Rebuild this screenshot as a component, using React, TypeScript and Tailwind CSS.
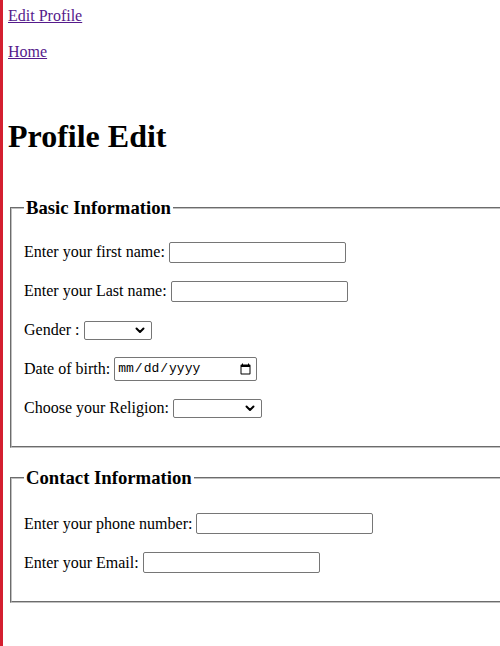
import React from "react";

function Select({ width }: { width: string }) {
    return (
        <div className={`${width} h-[19px] flex items-center justify-end pr-[6px] border border-[#767676] rounded-[2px] bg-white`}>
            <svg width="10" height="10" viewBox="0 0 10 10" fill="none">
                <path d="M1.5 3.5 L5 7 L8.5 3.5" stroke="#000" strokeWidth="2" strokeLinecap="round" strokeLinejoin="round" />
            </svg>
        </div>
    );
}

function TextBox({ type = "text" }: { type?: string }) {
    return (
        <input
            type={type}
            className="w-[177px] h-[21px] px-[2px] border border-[#767676] rounded-[2px] bg-white text-[13.33px] font-['Liberation_Sans',sans-serif]"
        />
    );
}

function Row({ children }: { children: React.ReactNode }) {
    return <div className="h-[23px] flex items-center gap-[4px] whitespace-nowrap">{children}</div>;
}

export default function App() {
    return (
        <div className="min-h-screen overflow-hidden border-l-[3px] border-[#d41f30] pl-[5px] pt-[7px] pb-[40px] bg-white text-black text-[16px] leading-[18px] font-['Liberation_Serif',serif]">

            <div className="flex flex-col items-start gap-[18px]">
                <a href="#" className="text-[#551a8b] underline">Edit Profile</a>
                <a href="#" className="text-[#551a8b] underline">Home</a>
            </div>

            <h1 className="mt-[57px] text-[32px] leading-[37px] font-bold">Profile Edit</h1>

            <form className="w-[640px]">

                <fieldset className="mt-[42px] mx-[2px] px-[12px] pt-[5.6px] pb-[10px] border-2 [border-style:groove] border-[#c0c0c0]">
                    <legend className="px-[2px] text-[18.72px] leading-[22px] font-bold">Basic Information</legend>
                    <div className="my-[16px] flex flex-col gap-[16px]">
                        <Row>
                            <span>Enter your first name:</span>
                            <TextBox />
                        </Row>
                        <Row>
                            <span>Enter your Last name:</span>
                            <TextBox />
                        </Row>
                        <Row>
                            <span>Gender :</span>
                            <Select width="w-[68px]" />
                        </Row>
                        <Row>
                            <span>Date of birth:</span>
                            <input
                                type="date"
                                className="w-[143px] h-[24px] px-[2px] border border-[#767676] rounded-[2px] bg-white text-[13px] font-['Liberation_Mono',monospace]"
                            />
                        </Row>
                        <Row>
                            <span>Choose your Religion:</span>
                            <Select width="w-[89px]" />
                        </Row>
                    </div>
                </fieldset>

                <fieldset className="mt-[19px] mx-[2px] px-[12px] pt-[5.6px] pb-[10px] border-2 [border-style:groove] border-[#c0c0c0]">
                    <legend className="px-[2px] text-[18.72px] leading-[22px] font-bold">Contact Information</legend>
                    <div className="mt-[18px] mb-[17px] flex flex-col gap-[16px]">
                        <Row>
                            <span>Enter your phone number:</span>
                            <TextBox type="tel" />
                        </Row>
                        <Row>
                            <span>Enter your Email:</span>
                            <TextBox type="email" />
                        </Row>
                    </div>
                </fieldset>

            </form>
        </div>
    );
}
